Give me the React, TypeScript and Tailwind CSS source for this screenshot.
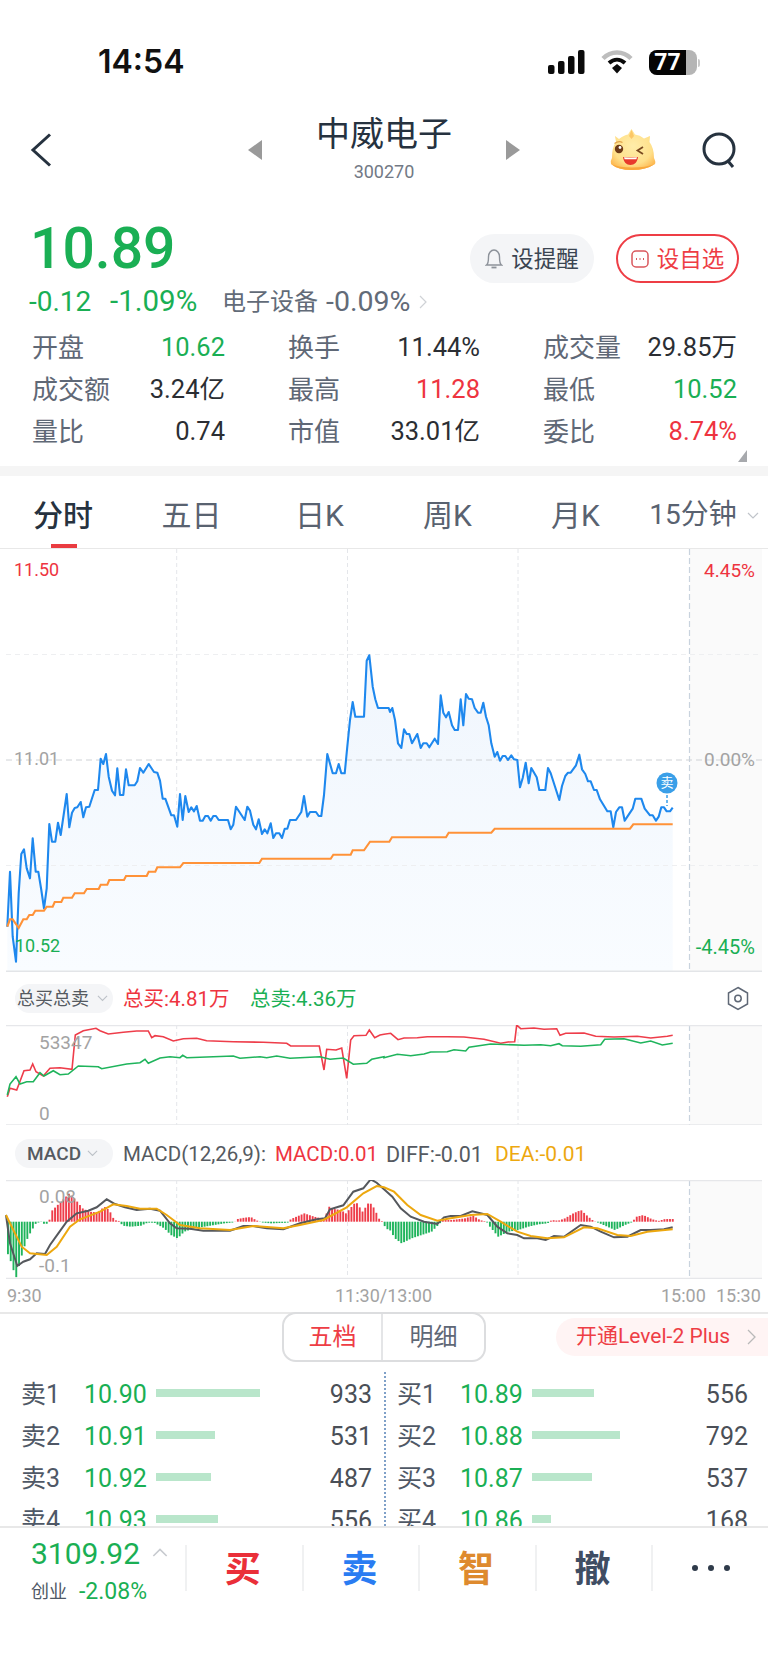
import React from 'react';

const pts = (a: number[], ox: number, oy: number) => {
  const out: string[] = [];
  for (let i = 0; i < a.length; i += 2) out.push(`${(a[i] / 3 + ox).toFixed(1)},${(a[i + 1] / 3 + oy).toFixed(1)}`);
  return out;
};
const line = (a: number[], b: number[], oy: number) => [...pts(a, 0, oy), ...pts(b, 384, oy)].join(' ');

const blueA = [22,860,30,695,38,890,48,965,56,760,64,642,72,628,80,685,90,715,98,595,107,695,115,695,124,750,132,805,140,745,148,552,156,605,166,605,174,548,182,585,200,462,208,562,216,518,224,504,232,502,242,486,250,532,258,502,268,500,284,450,294,450,302,356,310,372,318,342,326,410,336,452,345,466,352,385,360,465,370,465,378,388,386,436,404,436,412,424,420,384,430,398,446,372,462,396,472,398,480,422,488,476,496,476,514,526,522,526,532,560,540,462,548,540,556,468,566,516,574,502,582,514,590,498,600,542,608,542,616,528,624,528,632,542,640,528,648,528,656,540,684,540,692,568,700,554,708,500,734,540,742,500,750,512,760,554,768,568,776,538,786,582,794,568,802,580,812,550,820,594,828,580,838,580,846,594,854,566,862,566,870,540,888,540,904,516,912,468,922,530,930,516,948,516,956,528,964,528,972,465,982,342,998,400,1008,400,1016,372,1024,400,1034,400,1042,320,1050,240,1058,186,1066,230,1092,230,1100,62,1108,46,1118,140,1126,178,1134,204,1152,204];
const blueB = [14,204,18,216,25,204,33,240,42,310,52,324,60,268,68,282,76,282,84,310,100,282,110,324,118,310,128,310,136,322,152,296,162,312,170,166,178,218,186,232,194,216,204,256,212,270,222,270,230,178,238,256,246,162,254,176,264,178,272,204,282,218,290,218,298,188,306,230,314,256,322,310,332,350,340,336,348,362,356,348,364,348,372,360,382,346,390,358,400,360,408,442,416,414,425,368,434,430,442,384,458,412,466,450,484,450,492,384,500,400,526,480,534,438,544,408,552,398,560,398,576,376,586,344,594,388,604,402,612,424,620,424,630,450,638,450,648,478,670,514,680,514,688,562,696,516,706,502,714,502,722,542,746,506,754,476,772,476,782,506,798,526,806,526,816,542,824,530,832,502,840,502,848,514,858,514,866,503];
const avgA = [22,860,30,838,38,838,56,864,70,838,80,838,88,825,98,825,106,812,132,812,140,800,158,800,164,786,184,786,190,773,216,773,224,760,252,760,260,747,296,747,302,734,322,734,328,720,372,720,378,708,440,708,446,695,466,695,472,682,540,682,550,669,778,669,786,656,992,656,1000,644,1052,644,1058,631,1092,631,1110,605,1152,605];
const avgB = [16,605,24,592,186,592,194,578,322,578,332,566,738,566,748,553,866,553];
const redA = [22,380,30,355,50,360,72,302,90,300,98,282,108,305,130,318,150,295,180,293,216,298,226,195,250,182,288,175,300,182,325,192,370,187,410,183,445,183,455,203,465,197,490,200,520,213,550,206,590,205,620,212,700,215,790,217,860,220,872,228,958,228,972,300,980,238,1008,240,1025,234,1040,325,1052,210,1062,197,1098,196,1108,180,1124,203,1140,195,1152,193];
const redB = [20,190,42,209,60,204,100,203,130,200,190,200,240,201,300,208,350,220,372,216,392,215,398,165,410,176,450,174,480,178,518,176,528,196,545,190,600,189,635,199,690,201,760,199,800,204,850,199,866,196];
const grnA = [22,375,30,342,48,320,60,342,80,335,100,335,120,308,132,318,160,302,180,314,205,312,235,288,295,290,305,296,380,282,420,278,435,268,445,280,480,264,510,260,540,263,548,256,560,263,700,258,720,265,780,260,800,263,830,258,870,265,960,260,990,268,1030,264,1060,283,1100,280,1115,268,1152,260];
const grnB = [0,263,40,253,80,257,120,252,140,246,190,245,210,239,245,243,255,232,320,222,420,226,470,224,500,227,525,221,535,227,590,229,650,224,662,208,720,206,770,219,800,213,835,225,866,220];
const diffA = [18,735,30,820,52,888,70,875,90,868,110,850,135,852,150,825,175,790,200,755,230,730,265,722,290,712,320,688,345,702,375,712,410,720,450,716,480,722,510,760,530,775,570,776,610,782,690,782,730,768,760,768,800,775,850,778,900,760,950,748,975,745,990,718,1030,706,1060,665,1090,655,1112,628,1130,638,1152,658];
const diffB = [25,680,50,715,80,740,120,755,160,762,180,742,200,738,230,738,265,724,310,735,340,770,370,790,400,795,420,805,460,805,485,810,510,798,540,800,590,765,620,770,650,785,690,802,730,800,770,780,800,780,840,778,866,772];
const deaA = [18,735,40,780,65,830,90,850,140,855,170,830,210,770,240,748,300,725,340,703,380,708,420,716,470,716,500,735,540,765,600,775,690,780,760,768,850,775,900,765,970,750,1040,712,1090,670,1130,648,1152,652];
const deaB = [30,665,70,705,110,735,160,752,200,745,260,735,310,732,350,755,400,785,440,798,490,805,540,802,600,772,640,775,700,795,740,798,790,785,866,778];
const histA = [18,90,30,120,45,170,60,110,75,60,90,30,105,5,120,0,125,5,135,8,145,0,148,-28,165,-45,185,-65,205,-85,225,-65,245,-40,265,-30,290,-28,310,-45,325,-35,340,-5,355,-2,365,12,390,15,420,12,440,3,460,3,490,20,510,40,530,50,550,30,580,20,610,15,640,10,670,5,700,2,710,-8,730,-12,750,-14,765,-5,780,2,810,5,860,3,870,-8,910,-25,940,-15,970,-8,985,-45,1000,-38,1020,-35,1035,-25,1065,-60,1085,-30,1105,-60,1120,-40,1135,-8,1145,0,1152,15];
const histB = [0,20,15,25,30,50,50,65,80,50,110,40,140,30,165,5,170,-5,200,-5,240,-10,265,-18,285,-5,305,0,315,15,340,45,370,30,400,25,430,15,460,8,488,5,494,0,500,-5,520,-3,540,-10,565,-25,588,-35,610,-15,625,-3,640,3,690,25,720,10,740,2,755,-15,775,-20,800,-8,820,-2,840,-8,866,-8];

const env: [number, number][] = [];
for (let i = 0; i < histA.length; i += 2) env.push([histA[i] / 3, histA[i + 1] / 3]);
for (let i = 0; i < histB.length; i += 2) env.push([histB[i] / 3 + 384, histB[i + 1] / 3]);
const valAt = (x: number) => {
  for (let i = 1; i < env.length; i++) {
    if (x <= env[i][0]) {
      const [x0, y0] = env[i - 1];
      const [x1, y1] = env[i];
      return y0 + ((y1 - y0) * (x - x0)) / (x1 - x0 || 1);
    }
  }
  return env[env.length - 1][1];
};
const bars: { x: number; v: number }[] = [];
for (let x = 7; x < 673; x += 2.77) bars.push({ x, v: valAt(x) });

const Chevron = ({ className = '', d = 'M1 1l5 5 5-5' }: { className?: string; d?: string }) => (
  <svg viewBox="0 0 12 7" className={className} fill="none" stroke="currentColor" strokeWidth="1.2">
    <path d={d} />
  </svg>
);

const Grid = ({ top, bottom, h }: { top: number; bottom: number; h: number }) => (
  <>
    <rect x="690" y={top} width="72" height={h} fill="#fafafa" />
    {[176.7, 347.5, 518].map((x) => (
      <line key={x} x1={x} x2={x} y1={top} y2={bottom} stroke="#e4e6ea" strokeDasharray="4 3" />
    ))}
    <line x1="689.5" x2="689.5" y1={top} y2={bottom} stroke="#c9d3de" strokeWidth="1.2" strokeDasharray="6 3" />
  </>
);

const stats: [string, string, string][] = [
  ['开盘', '10.62', 'text-[#1aaf54]'],
  ['换手', '11.44%', 'text-[#2b2e33]'],
  ['成交量', '29.85万', 'text-[#2b2e33]'],
  ['成交额', '3.24亿', 'text-[#2b2e33]'],
  ['最高', '11.28', 'text-[#ee3440]'],
  ['最低', '10.52', 'text-[#1aaf54]'],
  ['量比', '0.74', 'text-[#2b2e33]'],
  ['市值', '33.01亿', 'text-[#2b2e33]'],
  ['委比', '8.74%', 'text-[#ee3440]'],
];
const tabs = ['分时', '五日', '日K', '周K', '月K'];
const sells: [string, string, number, string][] = [
  ['卖1', '10.90', 104, '933'],
  ['卖2', '10.91', 59, '531'],
  ['卖3', '10.92', 55, '487'],
  ['卖4', '10.93', 62, '556'],
];
const buys: [string, string, number, string][] = [
  ['买1', '10.89', 62, '556'],
  ['买2', '10.88', 88, '792'],
  ['买3', '10.87', 60, '537'],
  ['买4', '10.86', 19, '168'],
];

const Side = ({ rows, pl, pr }: { rows: [string, string, number, string][]; pl: string; pr: string }) => (
  <div className={`w-[384px] flex flex-col ${pl} ${pr}`}>
    {rows.map(([l, p, w, v]) => (
      <div key={l} className="h-[42px] shrink-0 flex items-center text-[25px] leading-none">
        <span className="w-[63px] text-[#4f5866]">{l}</span>
        <span className="w-[72px] text-[#1aaf54]">{p}</span>
        <div className="flex-1 h-[8px] -mt-[2px]">
          <div className="h-full bg-[#b9e6cb]" style={{ width: w }} />
        </div>
        <span className="text-[#4a4f57]">{v}</span>
      </div>
    ))}
  </div>
);

export default function App() {
  return (
    <div className="w-[768px] h-[1670px] overflow-hidden bg-white flex flex-col font-['Roboto','Noto_Sans_CJK_SC',sans-serif]">
      {/* status bar */}
      <div className="h-[100px] shrink-0 flex justify-between pt-[45px] pl-[98px] pr-[68px]">
        <span className="text-[32px] leading-[34px] font-semibold text-[#111] font-['Inter','Roboto',sans-serif]">14:54</span>
        <div className="flex items-start gap-[16px] pt-[5px]">
          <svg width="37" height="24" viewBox="0 0 37 24" fill="#0b0b0b">
            <rect x="0" y="15" width="6.5" height="9" rx="2" />
            <rect x="10" y="11" width="6.5" height="13" rx="2" />
            <rect x="20" y="6" width="6.5" height="18" rx="2" />
            <rect x="30" y="0" width="6.5" height="24" rx="2" />
          </svg>
          <svg width="32" height="24" viewBox="0 0 32 24" fill="none" strokeLinecap="butt">
            <path d="M2 8.5C10 .5 22 .5 30 8.5" stroke="#bdbdbd" strokeWidth="4.5" />
            <path d="M8 13c5-4.5 11-4.5 16 0" stroke="#0b0b0b" strokeWidth="4" />
            <path d="M11 18l5-4 5 4-5 5.5z" fill="#0b0b0b" />
          </svg>
          <div className="relative flex items-center">
            <div className="w-[48px] h-[25px] rounded-[8px] overflow-hidden bg-[#b5b5b5] relative">
              <div className="w-[37px] h-full bg-[#050505] flex items-center justify-center text-white text-[23px] font-bold leading-none">77</div>
            </div>
            <div className="w-[2px] h-[8px] ml-[1px] bg-[#c9c9c9] rounded-r-sm" />
          </div>
        </div>
      </div>

      {/* nav */}
      <div className="h-[100px] shrink-0 grid grid-cols-[240px_288px_240px]">
        <div className="pl-[30px] pt-[33px]">
          <svg width="22" height="34" viewBox="0 0 22 34" fill="none" stroke="#26323f" strokeWidth="3">
            <path d="M20 1.5L3 17l17 15.5" />
          </svg>
        </div>
        <div className="flex items-start justify-between pl-[8px] pr-[8px]">
          <svg width="14" height="20" viewBox="0 0 14 20" fill="#9a9a9a" className="mt-[40px]"><path d="M14 0v20L0 10z" /></svg>
          <div className="flex flex-col items-center">
            <span className="text-[34px] leading-[40px] mt-[14px] text-[#26323f]">中威电子</span>
            <span className="text-[18px] leading-[20px] mt-[8px] text-[#727985]">300270</span>
          </div>
          <svg width="14" height="20" viewBox="0 0 14 20" fill="#9a9a9a" className="mt-[40px]"><path d="M0 0v20l14-10z" /></svg>
        </div>
        <div className="flex items-start pl-[82px] pt-[28px]">
          <svg width="48" height="43" viewBox="0 0 48 43">
            <defs>
              <radialGradient id="mg" cx="50%" cy="42%" r="62%">
                <stop offset="0%" stopColor="#ffedaa" />
                <stop offset="70%" stopColor="#ffe08a" />
                <stop offset="100%" stopColor="#fdbb55" />
              </radialGradient>
            </defs>
            <path d="M5 8L9 11Q14 7 18 6.500L21.500 1 25 6.500Q30 7 34 10.500L40 8 39.500 14Q44 20 44 30 46 34 45 36 36 42 22 42 8 42 1 36 0 33 2 30 2 19 6 14Z" fill="url(#mg)" />
            <path d="M1 36Q8 42 22 42 36 42 45 36 36 39.500 22 39.500 9 39.500 1 36Z" fill="#f9a83c" />
            <path d="M21.500 2L24 8 21.500 11 19 8Z" fill="#fcc766" />
            <circle cx="9" cy="21" r="4.200" fill="#6e3a17" />
            <circle cx="10" cy="19.500" r="1.400" fill="#fff" />
            <path d="M4.500 15.500c2-1.500 5.500-2.500 8-1" stroke="#e0a24a" strokeWidth="1.200" fill="none" />
            <path d="M33 19l-5.500 3.500 5.500 3.500" stroke="#7a4a20" strokeWidth="1.800" fill="none" />
            <path d="M13 29c5 .6 10 .6 15 0-.5 5-3.500 8-7.500 8S13.500 34 13 29z" fill="#e83a2c" />
            <path d="M14 29.300c4 .5 9 .5 13 0l-.6 2H14.600z" fill="#fff" />
          </svg>
          <svg width="36" height="37" viewBox="0 0 36 37" fill="none" stroke="#26323f" strokeWidth="3" className="ml-[44px] mt-[4px]">
            <circle cx="17" cy="17" r="15" />
            <path d="M26 29l5 6" />
          </svg>
        </div>
      </div>

      {/* quote */}
      <div className="h-[266px] shrink-0 relative pl-[32px] pr-[31px] pt-[17px]">
        <div className="h-[70px] flex items-start justify-between">
          <span className="text-[57px] leading-[64px] font-medium text-[#1aaf54] -ml-[2px]">10.89</span>
          <div className="flex gap-[22px] mt-[17px] -mr-[2px]">
            <div className="w-[124px] h-[49px] rounded-full bg-[#f4f5f7] flex items-center justify-center gap-[8px] text-[22.5px] text-[#3b4552]">
              <svg width="18" height="22" viewBox="0 0 18 22" fill="none" stroke="#8d929a" strokeWidth="1.4">
                <path d="M1.500 17c2-1.500 2-4 2-8 0-4 2.500-7 5.500-7s5.500 3 5.500 7c0 4 0 6.500 2 8z" />
                <path d="M6.500 19.500h5" strokeWidth="1.800" />
              </svg>
              <span className="mt-[3px]">设提醒</span>
            </div>
            <div className="w-[123px] h-[49px] rounded-full border-2 border-[#ee3d45] flex items-center justify-center gap-[8px] text-[22.5px] text-[#ee3d45]">
              <svg width="18" height="18" viewBox="0 0 18 18" fill="none" stroke="#d9575c" strokeWidth="1.500">
                <rect x="1" y="1" width="16" height="16" rx="4" />
                <path d="M5 9h1M8.500 9h1M12 9h1" strokeWidth="1.800" />
              </svg>
              <span className="mt-[3px]">设自选</span>
            </div>
          </div>
        </div>
        <div className="h-[30px] flex items-center text-[28px] leading-none -ml-[3px] whitespace-nowrap">
          <span className="text-[#1aaf54] w-[81px]">-0.12</span>
          <span className="text-[#1aaf54] text-[29.5px] w-[112px]">-1.09%</span>
          <span className="text-[#626b78] text-[24px]">电子设备</span>
          <span className="text-[#626b78] text-[28.5px] ml-[8px]">-0.09%</span>
          <svg width="8" height="14" viewBox="0 0 8 14" fill="none" stroke="#cfd2d6" strokeWidth="1.200" className="ml-[9px]"><path d="M1 1l6 6-6 6" /></svg>
        </div>
        <div className="mt-[10px] grid grid-cols-[193px_192px_194px] gap-x-[63px] auto-rows-[42px]">
          {stats.map(([l, v, c]) => (
            <div key={l} className="flex items-center justify-between text-[25.5px] leading-none">
              <span className="text-[#5f6876] text-[26px]">{l}</span>
              <span className={c}>{v}</span>
            </div>
          ))}
        </div>
        <svg width="9" height="12" viewBox="0 0 9 12" fill="#a7a9ad" className="absolute left-[738px] top-[250px]"><path d="M9 0v12H0z" /></svg>
      </div>

      <div className="h-[10px] shrink-0 bg-[#f5f5f5]" />

      {/* tabs */}
      <div className="h-[72px] shrink-0 grid grid-cols-6 pt-[6px] relative">
        {tabs.map((t, i) => (
          <div key={t} className={`flex items-center justify-center ${i === 0 ? 'text-[#26323f] font-medium text-[30px] -ml-[2px]' : 'text-[#596270] text-[30px] -ml-[1px]'}`}>{t}</div>
        ))}
        <div className="flex items-center justify-center gap-[10px] text-[#596270] text-[28px] whitespace-nowrap">
          15分钟
          <Chevron className="w-[12px] text-[#c0c4ca]" />
        </div>
        <div className="absolute left-[51px] bottom-0 w-[26px] h-[4px] bg-[#ea3c41]" />
      </div>

      {/* main chart */}
      <div className="h-[424px] shrink-0 relative border-t border-[#e8e8e8] text-[18px] leading-none">
        <svg width="768" height="423" viewBox="0 549 768 423" className="block">
          <defs>
            <linearGradient id="fill" x1="0" x2="0" y1="0" y2="1">
              <stop offset="0%" stopColor="#f0f6fd" />
              <stop offset="100%" stopColor="#f9fcff" />
            </linearGradient>
          </defs>
          <Grid top={549} bottom={971} h={422} />
          <polygon points={`7.300,971 ${line(blueA, blueB, 640)} 672.700,971`} fill="url(#fill)" />
          <line x1="6" x2="762" y1="654.500" y2="654.500" stroke="#eeeff1" strokeDasharray="5 4" />
          <line x1="6" x2="762" y1="865.500" y2="865.500" stroke="#eeeff1" strokeDasharray="5 4" />
          <line x1="6" x2="762" y1="760" y2="760" stroke="#cfd2d6" strokeDasharray="6 4" />
          <polyline points={line(blueA, blueB, 640)} fill="none" stroke="#1e88ee" strokeWidth="2.100" strokeLinejoin="round" />
          <polyline points={line(avgA, avgB, 640)} fill="none" stroke="#ff9238" strokeWidth="2.100" />
          <line x1="667" x2="667" y1="790" y2="806" stroke="#3a9fe8" strokeWidth="1.500" strokeDasharray="3 2" />
          <circle cx="667" cy="783" r="10.500" fill="#3a9fe8" />
          <line x1="6" x2="762" y1="971.200" y2="971.200" stroke="#e3e5e8" strokeWidth="1.500" />
        </svg>
        <span className="absolute left-[14px] top-[12px] text-[#ee3440]">11.50</span>
        <span className="absolute right-[13px] top-[12px] text-[19px] text-[#ee3440]">4.45%</span>
        <span className="absolute left-[14px] top-[201px] text-[#a3a3a3]">11.01</span>
        <span className="absolute right-[13px] top-[201px] text-[19px] text-[#a3a3a3]">0.00%</span>
        <span className="absolute left-[15px] top-[388px] text-[#1aaf54]">10.52</span>
        <span className="absolute right-[13px] top-[388px] text-[20px] text-[#1aaf54]">-4.45%</span>
        <span className="absolute left-[660px] top-[227px] w-[14px] text-center text-white text-[13px]">卖</span>
      </div>

      {/* total strip */}
      <div className="h-[53px] shrink-0 flex items-center pl-[15px] pr-[18px] leading-none">
        <div className="w-[98px] h-[29px] rounded-full bg-[#f4f5f7] flex items-center pl-[2px] gap-[8px] text-[18px] text-[#555a61] whitespace-nowrap">
          总买总卖
          <Chevron className="w-[11px] text-[#bcc1c7]" />
        </div>
        <span className="ml-[10px] mt-[2px] text-[20.5px] text-[#ee3440] w-[127px] whitespace-nowrap">总买:4.81万</span>
        <span className="mt-[2px] text-[20.5px] text-[#1aaf54] whitespace-nowrap">总卖:4.36万</span>
        <svg width="24" height="25" viewBox="0 0 24 25" fill="none" stroke="#5f6876" strokeWidth="1.500" className="ml-auto">
          <path d="M12 1.500l9.500 5.500v11L12 23.500 2.500 18V7z" />
          <circle cx="12" cy="12.500" r="3.200" />
        </svg>
      </div>

      {/* volume sub chart */}
      <div className="h-[100px] shrink-0 relative text-[19px] leading-none text-[#a3a3a3]">
        <svg width="768" height="100" viewBox="0 1025 768 100" className="block">
          <Grid top={1025} bottom={1125} h={100} />
          <line x1="6" x2="762" y1="1025.500" y2="1025.500" stroke="#e6e7ea" strokeWidth="1.500" />
          <line x1="6" x2="762" y1="1125" y2="1125" stroke="#e6e7ea" strokeWidth="1.500" />
          <polyline points={line(redA, redB, 970)} fill="none" stroke="#ee3d4a" strokeWidth="1.600" />
          <polyline points={line(grnA, grnB, 970)} fill="none" stroke="#1fb45c" strokeWidth="1.600" />
        </svg>
        <span className="absolute left-[39px] top-[8px]">53347</span>
        <span className="absolute left-[39px] top-[79px]">0</span>
      </div>

      {/* MACD strip */}
      <div className="h-[55px] shrink-0 flex items-center pl-[15px] text-[20.5px] leading-none pt-[1px] whitespace-nowrap">
        <div className="w-[98px] h-[29px] rounded-full bg-[#f4f5f7] flex items-center pl-[12px] gap-[6px] text-[19px] text-[#555a61] font-medium">
          MACD
          <Chevron className="w-[11px] text-[#bcc1c7]" />
        </div>
        <span className="ml-[10px] mt-[3px] text-[#555a61] w-[152px]">MACD(12,26,9):</span>
        <span className="mt-[3px] text-[#ee3440] w-[111px]">MACD:0.01</span>
        <span className="mt-[3px] text-[#555a61] text-[21.5px] w-[109px]">DIFF:-0.01</span>
        <span className="mt-[3px] text-[#eda80f] text-[21px]">DEA:-0.01</span>
      </div>

      {/* MACD chart */}
      <div className="h-[99px] shrink-0 relative text-[19px] leading-none text-[#a3a3a3]">
        <svg width="768" height="99" viewBox="0 1180 768 99" className="block">
          <Grid top={1180} bottom={1279} h={99} />
          <line x1="6" x2="762" y1="1180.500" y2="1180.500" stroke="#e6e7ea" strokeWidth="1.500" />
          <line x1="6" x2="762" y1="1278.500" y2="1278.500" stroke="#e6e7ea" strokeWidth="1.500" />
          {bars.map((b) => (
            <rect
              key={b.x}
              x={b.x}
              width="1.900"
              y={b.v < 0 ? 1221.7 + b.v : 1221.7}
              height={Math.abs(b.v)}
              fill={b.v < 0 ? '#ee3d4a' : '#1fb45c'}
            />
          ))}
          <polyline points={line(diffA, diffB, 970)} fill="none" stroke="#55585d" strokeWidth="2" />
          <polyline points={line(deaA, deaB, 970)} fill="none" stroke="#eda80f" strokeWidth="2" />
        </svg>
        <span className="absolute left-[39px] top-[7px]">0.08</span>
        <span className="absolute left-[39px] top-[76px]">-0.1</span>
      </div>

      {/* time axis */}
      <div className="h-[33px] shrink-0 flex items-center pl-[7px] pr-[6px] text-[18px] leading-none text-[#a3a3a3]">
        <span className="w-[328px]">9:30</span>
        <span className="w-[326px]">11:30/13:00</span>
        <span className="w-[55px]">15:00</span>
        <span>15:30</span>
      </div>

      {/* order book tabs */}
      <div className="h-[60px] shrink-0 border-t-2 border-[#e8e8e8] relative flex justify-center">
        <div className="w-[204px] h-[50px] -mt-[2px] rounded-[14px] border-2 border-[#dcdddf] flex text-[24px]">
          <div className="w-[99px] flex items-center justify-center text-[#ee3d45] border-r-2 border-[#e4e5e7]">五档</div>
          <div className="flex-1 flex items-center justify-center text-[#5f6876]">明细</div>
        </div>
        <div className="absolute right-0 top-[4px] w-[212px] h-[38px] rounded-l-full bg-[#fff4f4] flex items-center pl-[20px] text-[21px] text-[#ee3d45] whitespace-nowrap">
          开通Level-2 Plus
          <svg width="9" height="16" viewBox="0 0 9 16" fill="none" stroke="#b9b9b9" strokeWidth="1.300" className="ml-[17px]"><path d="M1 1l7 7-7 7" /></svg>
        </div>
      </div>

      {/* order book */}
      <div className="h-[154px] shrink-0 overflow-hidden flex pt-[1px] relative">
        <Side rows={sells} pl="pl-[21px]" pr="pr-[12px]" />
        <Side rows={buys} pl="pl-[13px]" pr="pr-[20px]" />
        <div className="absolute left-[384px] top-0 bottom-0 border-l-2 border-dotted border-[#7fa0c8]" />
      </div>

      {/* bottom bar */}
      <div className="flex-1 border-t-2 border-[#e8e8e8] flex items-start bg-white">
        <div className="w-[185px] shrink-0 pl-[31px] pt-[9px] relative">
          <div className="text-[30px] leading-[34px] text-[#1aaf54]">3109.92</div>
          <Chevron className="absolute left-[152px] top-[20px] w-[16px] text-[#c7cacf]" d="M1 6l5-5 5 5" />
          <div className="flex items-center mt-[9px] leading-none">
            <span className="text-[18px] text-[#4f5866] w-[48px]">创业</span>
            <span className="text-[23px] text-[#1aaf54]">-2.08%</span>
          </div>
        </div>
        {[
          ['买', 'text-[#ea2f39]'],
          ['卖', 'text-[#2a7cf2]'],
          ['智', 'text-[#de8a2e]'],
          ['撤', 'text-[#3f4d63]'],
        ].map(([t, c]) => (
          <div key={t} className={`w-[116.6px] h-[46px] mt-[17px] pt-[4px] pr-[3px] border-l-2 border-[#f0f1f2] flex items-center justify-center text-[36px] font-bold ${c}`}>{t}</div>
        ))}
        <div className="w-[116.6px] h-[46px] mt-[17px] border-l-2 border-[#f0f1f2] flex items-center justify-center gap-[10px]">
          <span className="w-[6px] h-[6px] rounded-full bg-[#2f3b4a]" />
          <span className="w-[6px] h-[6px] rounded-full bg-[#2f3b4a]" />
          <span className="w-[6px] h-[6px] rounded-full bg-[#2f3b4a]" />
        </div>
      </div>
    </div>
  );
}
